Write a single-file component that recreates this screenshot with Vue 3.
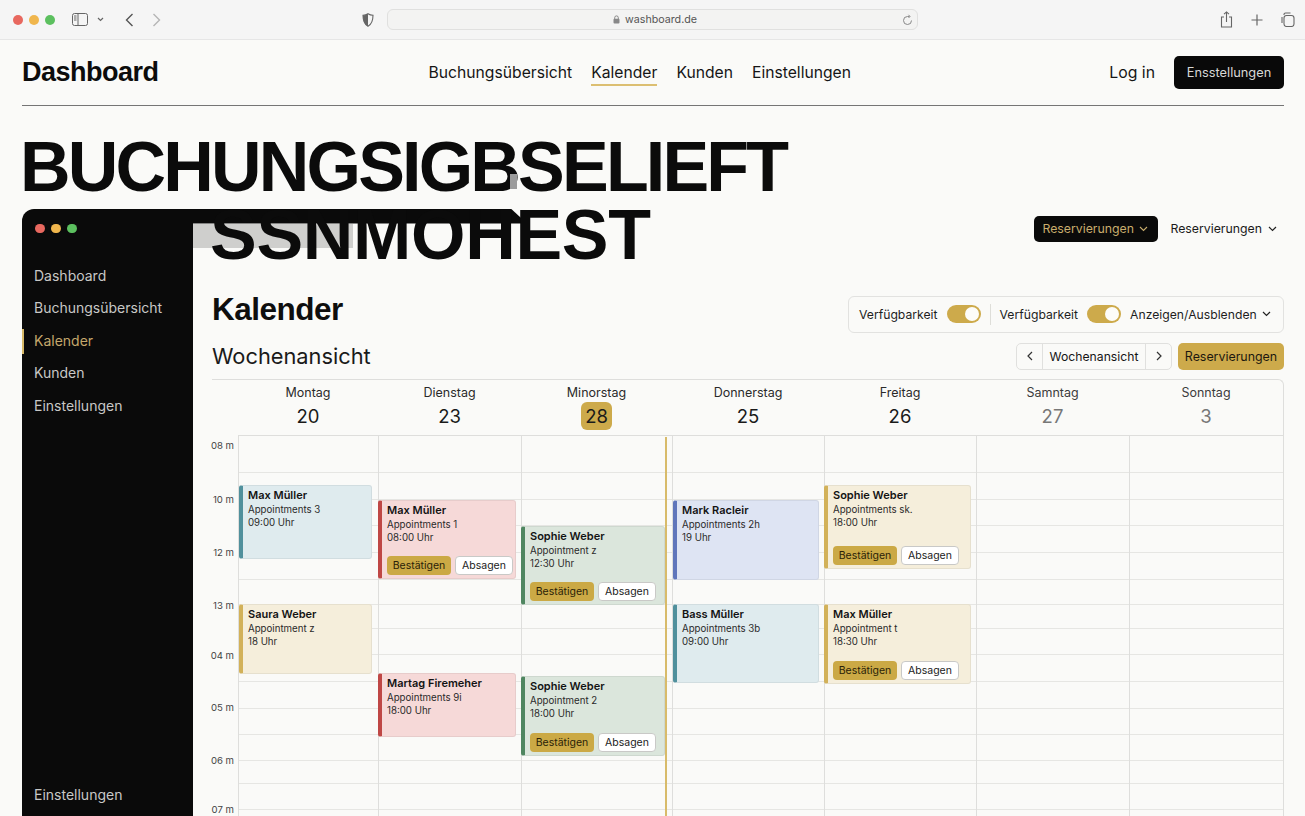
<script setup>
const topNav = ['Buchungsübersicht', 'Kalender', 'Kunden', 'Einstellungen']
const sideNav = ['Dashboard', 'Buchungsübersicht', 'Kalender', 'Kunden', 'Einstellungen']

const days = [
  { name: 'Montag', num: 20 },
  { name: 'Dienstag', num: 23 },
  { name: 'Minorstag', num: 28, today: true },
  { name: 'Donnerstag', num: 25 },
  { name: 'Freitag', num: 26 },
  { name: 'Samntag', num: 27, off: true },
  { name: 'Sonntag', num: 3, off: true }
]

// y of the hour labels, measured from the top of the grid body
const times = [
  { label: '08 m', y: 6 },
  { label: '10 m', y: 60 },
  { label: '12 m', y: 113 },
  { label: '13 m', y: 166 },
  { label: '04 m', y: 216 },
  { label: '05 m', y: 268 },
  { label: '06 m', y: 321 },
  { label: '07 m', y: 370 }
]

const rowHeights = [37, 27, 26, 27, 27, 25, 24, 26, 27, 27, 26, 26, 23, 26, 30]

const events = [
  { col: 0, x: 0, w: 133, y: 49, h: 74, tone: 'teal', name: 'Max Müller', sub: 'Appointments 3', time: '09:00 Uhr' },
  { col: 0, x: 0, w: 133, y: 168, h: 70, tone: 'gold', name: 'Saura Weber', sub: 'Appointment z', time: '18 Uhr' },
  { col: 1, x: -1, w: 138, y: 64, h: 79, tone: 'red', name: 'Max Müller', sub: 'Appointments 1', time: '08:00 Uhr', actions: true },
  { col: 1, x: -1, w: 138, y: 237, h: 64, tone: 'red', name: 'Martag Firemeher', sub: 'Appointments 9i', time: '18:00 Uhr' },
  { col: 2, x: -1, w: 144, y: 90, h: 79, tone: 'green', name: 'Sophie Weber', sub: 'Appointment z', time: '12:30 Uhr', actions: true },
  { col: 2, x: -1, w: 144, y: 240, h: 80, tone: 'green', name: 'Sophie Weber', sub: 'Appointment 2', time: '18:00 Uhr', actions: true },
  { col: 3, x: 0, w: 146, y: 64, h: 80, tone: 'blue', name: 'Mark Racleir', sub: 'Appointments 2h', time: '19 Uhr' },
  { col: 3, x: 0, w: 146, y: 168, h: 79, tone: 'teal', name: 'Bass Müller', sub: 'Appointments 3b', time: '09:00 Uhr' },
  { col: 4, x: -1, w: 147, y: 49, h: 84, tone: 'gold', name: 'Sophie Weber', sub: 'Appointments sk.', time: '18:00 Uhr', actions: true },
  { col: 4, x: -1, w: 147, y: 168, h: 80, tone: 'gold', name: 'Max Müller', sub: 'Appointment t', time: '18:30 Uhr', actions: true }
]

const eventsIn = (col) => events.filter((e) => e.col === col)

const eventBox = (e) => ({
  left: `${e.x}px`,
  top: `${e.y}px`,
  width: `${e.w}px`,
  height: `${e.h}px`
})
</script>

<template>
  <div class="page">
    <div class="browser-bar">
      <span class="light red"></span>
      <span class="light yellow"></span>
      <span class="light green"></span>
      <svg class="bar-icon sidebar-icon" width="16" height="13" viewBox="0 0 16 13" fill="none" stroke="#666" stroke-width="1">
        <rect x="0.5" y="0.5" width="15" height="12" rx="2" />
        <path d="M6 .5v12M2 3h2.5M2 5h2.5M2 7h2.5" />
      </svg>
      <svg class="bar-icon small-chevron" width="7" height="5" viewBox="0 0 7 5" fill="none" stroke="#666" stroke-width="1.2">
        <path d="M1 1l2.5 2.5L6 1" />
      </svg>
      <svg class="bar-icon back" width="9" height="14" viewBox="0 0 9 14" fill="none" stroke="#555" stroke-width="1.4">
        <path d="M7.5 1L1.5 7l6 6" />
      </svg>
      <svg class="bar-icon forward" width="9" height="14" viewBox="0 0 9 14" fill="none" stroke="#b5b5b5" stroke-width="1.4">
        <path d="M1.5 1l6 6-6 6" />
      </svg>
      <svg class="bar-icon shield" width="12" height="14" viewBox="0 0 12 14">
        <path d="M6 .7C4.3 1.8 2.7 2.2 1 2.3c0 4.6.6 8.6 5 11 4.4-2.4 5-6.4 5-11-1.7-.1-3.3-.5-5-1.6z" fill="none" stroke="#666" stroke-width="1.1" />
        <path d="M6 .7C4.3 1.8 2.7 2.2 1 2.3c0 4.6.6 8.6 5 11z" fill="#666" />
      </svg>
      <div class="url-box">
        <svg width="7" height="9" viewBox="0 0 7 9">
          <path d="M1.7 4V2.700a1.8 1.8 0 013.6 0V4" fill="none" stroke="#888" />
          <rect x="0.5" y="3.8" width="6" height="4.7" rx="1" fill="#888" />
        </svg>
        <span>washboard.de</span>
        <svg class="reload" width="11" height="12" viewBox="0 0 11 12" fill="none" stroke="#888" stroke-width="1">
          <path d="M9.5 6.5A4 4 0 115.5 2.5h2M6.5 .8l1.5 1.7-1.5 1.5" />
        </svg>
      </div>
      <svg class="bar-icon share" width="13" height="17" viewBox="0 0 13 17" fill="none" stroke="#666" stroke-width="1.1">
        <path d="M4 6H1.5v10h10V6H9M6.5 11V1M4 3.2L6.5 .9 9 3.2" />
      </svg>
      <svg class="bar-icon plus" width="12" height="12" viewBox="0 0 12 12" fill="none" stroke="#666" stroke-width="1.2">
        <path d="M6 .5v11M.5 6h11" />
      </svg>
      <svg class="bar-icon tabs" width="14" height="15" viewBox="0 0 14 15" fill="none" stroke="#666" stroke-width="1.1">
        <path d="M3 3V2.5A1.5 1.5 0 014.5 1h5" />
        <rect x="3" y="3.5" width="10" height="11" rx="2.5" />
        <path d="M1 5v6" />
      </svg>
    </div>

    <header class="site-header">
      <div class="logo">Dashboard</div>
      <nav class="top-nav">
        <a v-for="item in topNav" :key="item" :class="{ active: item === 'Kalender' }">{{ item }}</a>
      </nav>
      <a class="login">Log in</a>
      <button class="dark-btn">Ensstellungen</button>
    </header>

    <h1 class="hero">
      <span class="hero-first">BUCHUNGSIGBSELIEFT</span>
      <span class="hero-second">SSNMOHEST</span>
      <i class="hero-smudge"></i>
    </h1>

    <section class="window">
      <div class="window-strip"></div>
      <div class="window-shade"></div>

      <aside class="sidebar">
        <div class="side-lights">
          <span class="light red"></span>
          <span class="light yellow"></span>
          <span class="light green"></span>
        </div>
        <a v-for="item in sideNav" :key="item" class="side-link" :class="{ active: item === 'Kalender' }">{{ item }}</a>
        <a class="side-link side-bottom">Einstellungen</a>
      </aside>

      <main class="main">
        <div class="row-actions">
          <button class="res-dark">
            Reservierungen
            <svg width="9" height="6" viewBox="0 0 9 6" fill="none" stroke="#c9ad6d" stroke-width="1.1"><path d="M1 1l3.5 3.5L8 1" /></svg>
          </button>
          <button class="res-plain">
            Reservierungen
            <svg width="9" height="6" viewBox="0 0 9 6" fill="none" stroke="#222" stroke-width="1.2"><path d="M1 1l3.5 3.5L8 1" /></svg>
          </button>
        </div>

        <div class="row-title">
          <h2>Kalender</h2>
          <div class="filters">
            <span>Verfügbarkeit</span>
            <span class="toggle"><i></i></span>
            <span class="divider"></span>
            <span>Verfügbarkeit</span>
            <span class="toggle"><i></i></span>
            <span class="filter-select">
              Anzeigen/Ausblenden
              <svg width="9" height="6" viewBox="0 0 9 6" fill="none" stroke="#222" stroke-width="1.2"><path d="M1 1l3.5 3.5L8 1" /></svg>
            </span>
          </div>
        </div>

        <div class="row-week">
          <h3>Wochenansicht</h3>
          <div class="pager">
            <button>
              <svg width="6" height="10" viewBox="0 0 6 10" fill="none" stroke="#333" stroke-width="1.2"><path d="M5 1L1 5l4 4" /></svg>
            </button>
            <span>Wochenansicht</span>
            <button>
              <svg width="6" height="10" viewBox="0 0 6 10" fill="none" stroke="#333" stroke-width="1.2"><path d="M1 1l4 4-4 4" /></svg>
            </button>
          </div>
          <button class="res-gold">Reservierungen</button>
        </div>

        <div class="calendar">
          <div class="cal-head">
            <div></div>
            <div v-for="day in days" :key="day.name" class="day" :class="{ off: day.off }">
              <div class="day-name">{{ day.name }}</div>
              <div class="day-num" :class="{ today: day.today }">{{ day.num }}</div>
            </div>
          </div>

          <div class="cal-body">
            <div class="gutter">
              <span v-for="t in times" :key="t.label" class="time" :style="{ top: t.y + 'px' }">{{ t.label }}</span>
            </div>
            <div class="grid-area">
              <div class="rows">
                <div v-for="(h, i) in rowHeights" :key="i" class="grid-row" :style="{ height: h + 'px' }"></div>
              </div>
              <div class="cols">
                <div v-for="(day, c) in days" :key="day.name" class="col">
                  <article v-for="e in eventsIn(c)" :key="e.name + e.y" class="event" :class="e.tone" :style="eventBox(e)">
                    <strong>{{ e.name }}</strong>
                    <span>{{ e.sub }}</span>
                    <span>{{ e.time }}</span>
                    <div v-if="e.actions" class="event-actions">
                      <button class="confirm">Bestätigen</button>
                      <button class="cancel">Absagen</button>
                    </div>
                  </article>
                </div>
              </div>
              <div class="now-line"></div>
            </div>
          </div>
        </div>
      </main>
    </section>
  </div>
</template>

<style>
html,
body {
  margin: 0;
  background: #fafaf8;
}
</style>

<style scoped>
.page {
  height: 816px;
  overflow: hidden;
  position: relative;
  background: #fafaf8;
  color: #151515;
  font-family: "Inter", "Liberation Sans", sans-serif;
}

button {
  font-family: inherit;
  cursor: pointer;
}

/* browser chrome */
.browser-bar {
  height: 39px;
  background: #f5f5f5;
  border-bottom: 1px solid #e6e6e6;
  display: flex;
  align-items: center;
  padding-left: 13px;
}

.light {
  width: 10px;
  height: 10px;
  border-radius: 50%;
  margin-right: 6px;
}

.light.red { background: #e8685f; }
.light.yellow { background: #f0b64d; }
.light.green { background: #5cc05f; }

.bar-icon { flex: none; }
.sidebar-icon { margin-left: 11px; }
.small-chevron { margin-left: 9px; }
.back { margin-left: 21px; }
.forward { margin-left: 18px; }
.shield { margin-left: 201px; }

.url-box {
  width: 531px;
  height: 21px;
  margin-left: 13px;
  box-sizing: border-box;
  background: #f3f3f2;
  border: 1px solid #e0e0df;
  border-radius: 6px;
  display: flex;
  align-items: center;
  padding-left: 225px;
  gap: 5px;
  font-size: 10.7px;
  color: #555;
}

.reload { margin-left: auto; margin-right: 4px; }
.share { margin-left: 302px; }
.plus { margin-left: 18px; }
.tabs { margin-left: 18px; }

/* site header */
.site-header {
  height: 65px;
  margin: 0 21px 0 22px;
  border-bottom: 1.5px solid #757575;
  display: flex;
  align-items: center;
}

.logo {
  font-family: "Liberation Sans", sans-serif;
  font-size: 27px;
  font-weight: 700;
  letter-spacing: -0.5px;
  color: #0c0c0c;
}

.top-nav {
  margin-left: 270px;
  display: flex;
  gap: 19px;
  font-size: 15.7px;
}

.top-nav a {
  padding: 4px 0 2px;
  border-bottom: 2px solid transparent;
}

.top-nav a.active {
  border-bottom-color: #dcbf72;
}

.login {
  margin-left: auto;
  font-size: 15.8px;
}

.dark-btn {
  margin-left: 19px;
  width: 110px;
  height: 33px;
  border: 0;
  border-radius: 5px;
  background: #090909;
  color: #d8d8d6;
  font-size: 12.8px;
}

/* hero */
.hero {
  position: relative;
  z-index: 2;
  margin: 28px 0 0 20px;
  font-family: "Liberation Sans", sans-serif;
  font-size: 70px;
  font-weight: 700;
  line-height: 67px;
  color: #0b0b0b;
  white-space: nowrap;
  pointer-events: none;
}

.hero span {
  display: block;
}

.hero .hero-first {
  letter-spacing: -2.8px;
}

.hero .hero-second {
  margin-top: 1px;
  padding-left: 190px;
  letter-spacing: -0.3px;
}

.hero-smudge {
  position: absolute;
  left: 490px;
  top: 40px;
  width: 7px;
  height: 15px;
  background: #9b9b9b;
}

/* app window */
.window {
  position: relative;
  margin: -60.5px 21px 0 22px;
  display: flex;
  height: 607px;
}

.window-strip {
  position: absolute;
  left: 100px;
  top: 0;
  width: 405px;
  height: 15px;
  background: #0a0a0a;
  clip-path: polygon(0 0, 96% 0, 100% 100%, 0 100%);
}

.window-shade {
  position: absolute;
  left: 171px;
  top: 15px;
  width: 160px;
  height: 24px;
  background: #cfcfcd;
}

.sidebar {
  position: relative;
  width: 171px;
  flex: none;
  background: #0a0a0a;
  border-radius: 12px 0 0 0;
  display: flex;
  flex-direction: column;
}

.side-lights {
  display: flex;
  padding: 15px 0 0 13px;
  margin-bottom: 26.5px;
}

.side-lights .light {
  width: 9.5px;
  height: 9.5px;
  margin-right: 6.5px;
}

.side-link {
  height: 32.5px;
  line-height: 32.5px;
  padding-left: 12px;
  font-size: 14px;
  color: #c8c8c6;
  position: relative;
}

.side-link.active {
  color: #c4a76c;
}

.side-link.active::before {
  content: "";
  position: absolute;
  left: 0;
  top: 4px;
  width: 2px;
  height: 25px;
  background: #d8b967;
}

.side-bottom {
  margin-top: auto;
  margin-bottom: 4px;
}

/* main */
.main {
  flex: 1;
  min-width: 0;
  padding-left: 19px;
  display: flex;
  flex-direction: column;
  position: relative;
}

.row-actions {
  margin-top: 7px;
  height: 26px;
  display: flex;
  justify-content: flex-end;
  align-items: center;
  gap: 12px;
  padding-right: 7px;
  position: relative;
  z-index: 1;
}

.res-dark,
.res-plain {
  display: flex;
  align-items: center;
  border: 0;
  font-size: 12.3px;
  padding: 0;
}

.res-dark {
  width: 124px;
  height: 26px;
  gap: 5px;
  padding-left: 8px;
  box-sizing: border-box;
  background: #0a0a0a;
  color: #c9ad6d;
  border-radius: 5px;
}

.res-plain {
  gap: 6px;
  background: none;
  color: #1a1a1a;
}

.row-title {
  margin-top: 54px;
  height: 37px;
  display: flex;
  align-items: center;
  justify-content: space-between;
}

.row-title h2 {
  margin: 0 0 10px;
  font-family: "Liberation Sans", sans-serif;
  font-size: 31.5px;
  font-weight: 700;
  letter-spacing: -0.5px;
  color: #0e0e0e;
}

.filters {
  width: 436px;
  height: 37px;
  box-sizing: border-box;
  border: 1px solid #e2e2e0;
  border-radius: 6px;
  padding-left: 10px;
  display: flex;
  align-items: center;
  font-size: 12.2px;
  color: #1e1e1e;
}

.toggle {
  width: 34px;
  height: 18px;
  margin-left: 9px;
  border-radius: 9px;
  background: #cdaa4b;
  position: relative;
  flex: none;
}

.toggle i {
  position: absolute;
  right: 2px;
  top: 2px;
  width: 14px;
  height: 14px;
  border-radius: 50%;
  background: #fdfcf8;
}

.divider {
  width: 1px;
  height: 21px;
  background: #deded9;
  margin: 0 9px;
}

.filter-select {
  margin-left: 9px;
  display: flex;
  align-items: center;
  gap: 5px;
}

.row-week {
  margin-top: 10px;
  height: 27px;
  display: flex;
  align-items: center;
}

.row-week h3 {
  margin: 0 auto 0 0;
  font-size: 21.8px;
  font-weight: 400;
  color: #1a1a1a;
}

.pager {
  height: 27px;
  box-sizing: border-box;
  width: 156px;
  border: 1px solid #e0e0de;
  border-radius: 5px;
  display: flex;
  align-items: center;
  font-size: 12.2px;
}

.pager button {
  width: 25px;
  height: 100%;
  background: none;
  border: 0;
  padding: 0;
  display: flex;
  align-items: center;
  justify-content: center;
  flex: none;
}

.pager span {
  flex: 1;
  height: 100%;
  line-height: 25px;
  text-align: center;
  border-left: 1px solid #e0e0de;
  border-right: 1px solid #e0e0de;
}

.res-gold {
  margin-left: 6px;
  width: 106px;
  height: 27px;
  border: 0;
  border-radius: 5px;
  background: #cdaa4b;
  color: #1c1810;
  font-size: 12.4px;
  padding: 0;
}

/* calendar */
.calendar {
  margin-top: 9px;
  border-top: 1px solid #dededc;
  border-right: 1px solid #dededc;
  border-radius: 0 6px 0 0;
}

.cal-head {
  display: grid;
  grid-template-columns: 26px 140px 143px 151px 152px 152px 153px 154px;
  height: 55px;
}

.day {
  text-align: center;
  position: relative;
}

.day-name {
  margin-top: 5px;
  font-size: 12.5px;
  line-height: 15px;
  color: #2a2a2a;
}

.day-num {
  width: 31px;
  height: 28px;
  margin: 2px auto 0;
  line-height: 28px;
  font-size: 18.5px;
  color: #1a1a1a;
  border-radius: 6px;
}

.day-num.today {
  background: #cdaa4b;
}

.day.off .day-num {
  color: #777;
}

.day.off .day-name {
  color: #3c3c3c;
}

.cal-body {
  display: flex;
  height: 400px;
}

.gutter {
  width: 26px;
  flex: none;
  position: relative;
}

.time {
  position: absolute;
  right: 4px;
  font-size: 9.6px;
  line-height: 1;
  color: #444;
  white-space: nowrap;
}

.grid-area {
  flex: 1;
  position: relative;
  border-top: 1px solid #dededc;
}

.grid-row {
  box-sizing: border-box;
  border-bottom: 1px solid #e6e6e3;
}

.rows {
  position: absolute;
  inset: 0;
  overflow: hidden;
}

.cols {
  position: absolute;
  inset: 0;
  display: grid;
  grid-template-columns: 140px 143px 151px 152px 152px 153px 154px;
}

.col {
  position: relative;
  border-left: 1px solid #dededc;
}

.now-line {
  position: absolute;
  left: 426.5px;
  top: 1px;
  bottom: 0;
  width: 2px;
  background: #d8bb6a;
}

/* events */
.event {
  position: absolute;
  box-sizing: border-box;
  border: 1px solid rgba(0, 0, 0, 0.06);
  border-left: 4px solid;
  border-radius: 3px;
  padding: 2px 0 0 5px;
  display: flex;
  flex-direction: column;
  font-size: 9.7px;
  line-height: 13px;
  color: #2a2a2a;
  overflow: hidden;
}

.event strong {
  font-size: 11px;
  font-weight: 600;
  line-height: 15px;
  color: #131313;
}

.event.teal { background: #dfebee; border-left-color: #50909c; }
.event.red { background: #f6d9d8; border-left-color: #bf4745; }
.event.green { background: #dbe6dc; border-left-color: #4f8660; }
.event.gold { background: #f5eedb; border-left-color: #d2b159; }
.event.blue { background: #dee4f3; border-left-color: #6076bb; }

.event-actions {
  margin-top: auto;
  margin-bottom: 3px;
  display: flex;
  gap: 4px;
}

.event-actions button {
  height: 19px;
  padding: 0;
  font-size: 10.5px;
  border-radius: 4px;
}

.confirm {
  width: 64px;
  background: #cba945;
  border: 0;
  color: #2a2208;
}

.cancel {
  width: 58px;
  background: #fff;
  border: 1px solid #c9c9c7;
  color: #1a1a1a;
}
</style>
